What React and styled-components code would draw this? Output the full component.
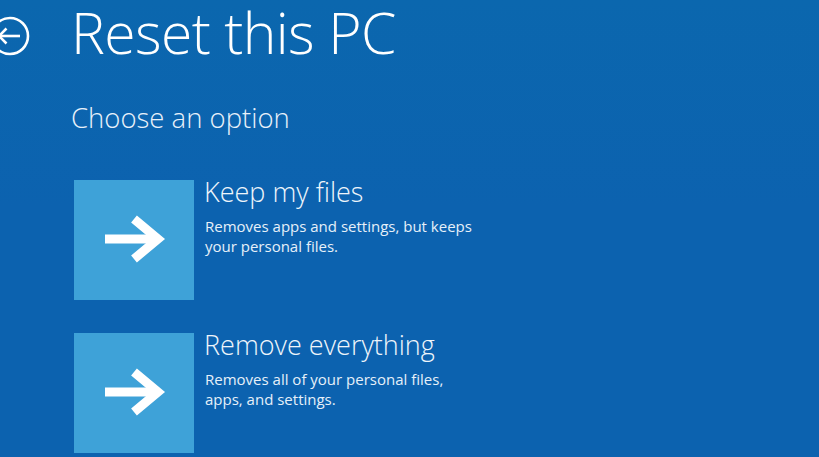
import React from "react";
import styled, { createGlobalStyle } from "styled-components";

const Global = createGlobalStyle`
  html, body { margin: 0; padding: 0; }
  body {
    width: 819px;
    height: 457px;
    overflow: hidden;
    background: linear-gradient(180deg, #0b67ae 0%, #0c62af 45%, #0c62af 100%);
    font-family: "Open Sans", "Noto Sans", sans-serif;
    color: #ffffff;
  }
`;

const Screen = styled.div`
  width: 819px;
  height: 457px;
  display: flex;
  flex-direction: column;
  overflow: hidden;
`;

const Header = styled.header`
  display: flex;
  align-items: flex-start;
  height: 72px;
`;

const BackButton = styled.button`
  width: 40px;
  height: 40px;
  margin: 16px 0 0 -10px;
  padding: 0;
  border: none;
  background: transparent;
  display: flex;
  flex-shrink: 0;
`;

const Title = styled.h1`
  margin: 0 0 0 41px;
  font-weight: 300;
  font-size: 57px;
  line-height: 64px;
  letter-spacing: -0.6px;
  white-space: nowrap;
  color: #fff;
`;

const Body = styled.main`
  display: flex;
  flex-direction: column;
  padding-left: 71px;
`;

const Subtitle = styled.h2`
  margin: 26px 0 0 0;
  font-weight: 300;
  font-size: 27.5px;
  line-height: 40px;
  color: #e8f1fa;
`;

const Options = styled.div`
  display: flex;
  flex-direction: column;
  gap: 33px;
  margin-top: 42px;
`;

const Option = styled.div`
  display: flex;
  align-items: flex-start;
  gap: 10px;
`;

const Tile = styled.div`
  width: 120px;
  height: 120px;
  margin-left: 3px;
  background: #3ea2d8;
  display: flex;
  align-items: center;
  justify-content: center;
  flex-shrink: 0;
`;

const Text = styled.div`
  display: flex;
  flex-direction: column;
`;

const OptionTitle = styled.div`
  font-weight: 300;
  font-size: 27px;
  line-height: 30px;
  margin-top: -3px;
  color: #eef5fb;
  white-space: nowrap;
`;

const OptionDesc = styled.div`
  font-weight: 400;
  font-size: 15px;
  line-height: 20px;
  margin-top: 9px;
  margin-left: 1px;
  color: #e6f0f9;
  width: 273px;
`;

const ArrowIcon = () => (
  <svg width="120" height="120" viewBox="0 0 120 120">
    <g fill="none" stroke="#ffffff" strokeWidth="9" strokeLinejoin="miter" strokeLinecap="butt">
      <line x1="31" y1="59" x2="84" y2="59" />
      <polyline points="60,39 84,59 60,79" />
    </g>
  </svg>
);

const BackIcon = () => (
  <svg width="40" height="40" viewBox="0 0 40 40">
    <g fill="none" stroke="#ffffff" strokeWidth="2.6">
      <circle cx="20" cy="20" r="18" />
      <line x1="9" y1="20" x2="30" y2="20" />
      <polyline points="16.5,12.5 9,20 16.5,27.5" />
    </g>
  </svg>
);

const options = [
  {
    title: "Keep my files",
    desc: "Removes apps and settings, but keeps your personal files.",
  },
  {
    title: "Remove everything",
    desc: "Removes all of your personal files, apps, and settings.",
  },
];

export default function App() {
  return (
    <>
      <Global />
      <Screen>
        <Header>
          <BackButton aria-label="Back">
            <BackIcon />
          </BackButton>
          <Title>Reset this PC</Title>
        </Header>
        <Body>
          <Subtitle>Choose an option</Subtitle>
          <Options>
            {options.map((o) => (
              <Option key={o.title}>
                <Tile>
                  <ArrowIcon />
                </Tile>
                <Text>
                  <OptionTitle>{o.title}</OptionTitle>
                  <OptionDesc>{o.desc}</OptionDesc>
                </Text>
              </Option>
            ))}
          </Options>
        </Body>
      </Screen>
    </>
  );
}
